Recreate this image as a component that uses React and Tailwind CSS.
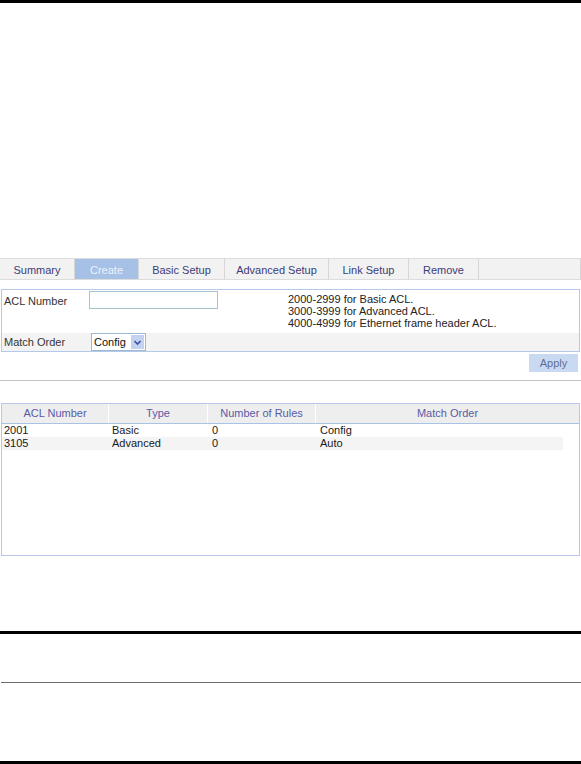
const tabs = [
  { label: 'Summary', w: 'w-[75px]' },
  { label: 'Create', w: 'w-[64px]', active: true },
  { label: 'Basic Setup', w: 'w-[86px]' },
  { label: 'Advanced Setup', w: 'w-[104px]' },
  { label: 'Link Setup', w: 'w-[80px]' },
  { label: 'Remove', w: 'w-[70px]' },
];

const rows = [
  { num: '2001', type: 'Basic', rules: '0', order: 'Config' },
  { num: '3105', type: 'Advanced', rules: '0', order: 'Auto' },
];

function TabBar() {
  return (
    <div className="flex h-[22px] border-y border-[#dcdcdc] bg-[#f2f2f2]">
      {tabs.map((t) => (
        <div
          key={t.label}
          className={`${t.w} flex items-center justify-center border-r border-[#d6d6d6] pt-[2px] ${
            t.active ? 'bg-[#a6c0e6] text-[#eef3fb]' : 'text-[#3c3c78]'
          }`}
        >
          {t.label}
        </div>
      ))}
      <div className="flex-1 border-r border-[#d6d6d6]" />
    </div>
  );
}

function CreateForm() {
  return (
    <div className="mx-px border border-[#b4c8ea]">
      <div className="flex h-[43px] items-start bg-white">
        <div className="w-[87px] pl-[2px] pt-[3px] text-[#333]">ACL Number</div>
        <div className="mt-[1px] h-[18px] w-[129px] border border-[#a9c3cc] bg-white" />
        <div className="ml-[70px] pt-[3px] leading-[12px] text-[#222]">
          <div>2000-2999 for Basic ACL.</div>
          <div>3000-3999 for Advanced ACL.</div>
          <div>4000-4999 for Ethernet frame header ACL.</div>
        </div>
      </div>
      <div className="flex h-[18px] items-center bg-[#f3f3f3]">
        <div className="w-[89px] pl-[2px] pt-px text-[#333]">Match Order</div>
        <div className="flex h-[18px] w-[55px] items-center border border-[#9cb8d4] bg-white pl-[2px] text-[#111]">
          <span className="flex-1 pt-px">Config</span>
          <span className="mr-px flex h-[14px] w-[13px] items-center justify-center bg-[#c4d2f2]">
            <svg width="9" height="9" viewBox="0 0 9 9">
              <path d="M1.5 3 L4.5 6 L7.5 3" fill="none" stroke="#3b4fa0" strokeWidth="1.6" />
            </svg>
          </span>
        </div>
      </div>
    </div>
  );
}

function AclTable() {
  return (
    <div className="mx-px flex h-[153px] flex-col border border-[#b4c8ea] bg-white">
      <div className="flex h-[20px] border-b border-[#a9c3e6] bg-[#eeeeee] text-[#5a5aa6]">
        <div className="flex w-[107px] items-center justify-center border-r border-white">ACL Number</div>
        <div className="flex w-[99px] items-center justify-center border-r border-white">Type</div>
        <div className="flex w-[108px] items-center justify-center border-r border-white">Number of Rules</div>
        <div className="flex flex-1 items-center justify-center">Match Order</div>
      </div>
      {rows.map((r, i) => (
        <div
          key={r.num}
          className={`mr-[16px] flex h-[13px] items-center leading-[13px] text-[#1a1a1a] ${
            i % 2 ? 'bg-[#f4f4f4]' : 'bg-white'
          }`}
        >
          <div className="w-[107px] pl-[2px]">{r.num}</div>
          <div className="w-[100px] pl-[3px]">{r.type}</div>
          <div className="w-[108px] pl-[3px]">{r.rules}</div>
          <div className="flex-1 pl-[3px]">{r.order}</div>
        </div>
      ))}
    </div>
  );
}

export default function App() {
  return (
    <div
      className="flex h-[764px] w-[581px] flex-col bg-white text-[11px]"
      style={{ fontFamily: '"Liberation Sans", Arial, sans-serif' }}
    >
      <div className="h-[3px] bg-black" />
      <div className="mt-[255px]">
        <TabBar />
      </div>
      <div className="mt-[9px]">
        <CreateForm />
      </div>
      <div className="mt-[2px] flex justify-end pr-[3px]">
        <button
          type="button"
          className="h-[18px] w-[49px] bg-[#c9d9f1] pt-px text-[#5f6f92]"
        >
          Apply
        </button>
      </div>
      <div className="mt-[8px] h-px bg-[#c4c4c4]" />
      <div className="mt-[22px]">
        <AclTable />
      </div>
      <div className="mt-[75px] h-[3px] bg-black" />
      <div className="mt-[48px] ml-px h-px bg-[#6e6e6e]" />
      <div className="mt-auto h-[3px] bg-black" />
    </div>
  );
}
